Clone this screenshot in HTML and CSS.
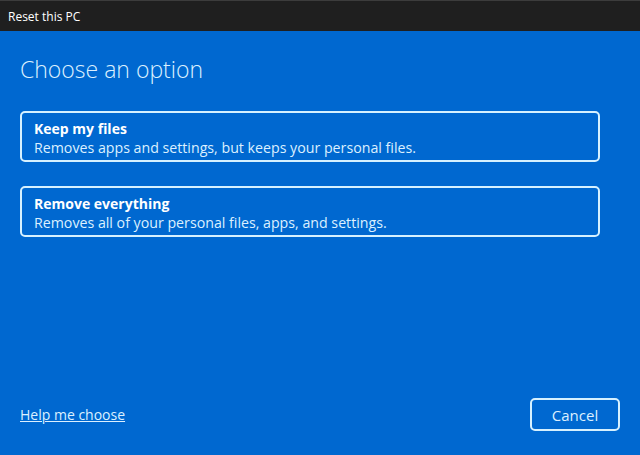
FILE: index.html
```html
<!DOCTYPE html>
<html lang="en">
<head>
    <meta charset="UTF-8">
    <title>Reset this PC</title>
    <link rel="stylesheet" href="styles.css">
</head>
<body>

<div class="window">
    <div class="title-bar">Reset this PC</div>

    <div class="content">
        <h1 class="heading">Choose an option</h1>

        <div class="option">
            <div class="option-title">Keep my files</div>
            <div class="option-desc">Removes apps and settings, but keeps your personal files.</div>
        </div>

        <div class="option">
            <div class="option-title">Remove everything</div>
            <div class="option-desc">Removes all of your personal files, apps, and settings.</div>
        </div>
    </div>

    <div class="footer">
        <a class="help-link" href="#">Help me choose</a>
        <button class="cancel-btn">Cancel</button>
    </div>
</div>

</body>
</html>
```

FILE: styles.css
```css
:root {
    --blue: #0068d0;
    --text: #dcf0ff;
    --edge: #d6f1ff;
}

html, body {
    margin: 0;
    height: 100%;
}

body {
    font-family: "Open Sans", "Noto Sans", sans-serif;
    background-color: var(--blue);
    color: var(--text);
    overflow: hidden;
}

.window {
    display: flex;
    flex-direction: column;
    height: 100%;
}

/* Title bar */
.title-bar {
    height: 30px;
    line-height: 32px;
    background-color: #1f1f1f;
    border-top: 1px solid #3c3c3c;
    color: #ffffff;
    font-size: 12px;
    padding-left: 8px;
}

/* Main area */
.content {
    flex: 1;
    padding: 0 40px 0 20px;
}

.heading {
    font-size: 23px;
    font-weight: 300;
    margin: 22px 0 26px;
    line-height: 32px;
}

.option {
    border: 2px solid var(--edge);
    border-radius: 5px;
    padding: 6px 12px 4px;
    margin-bottom: 24px;
    height: 37px;
}

.option-title {
    font-weight: 700;
    font-size: 14px;
    line-height: 19px;
    color: #ffffff;
}

.option-desc {
    font-size: 14.2px;
    line-height: 19px;
}

/* Footer */
.footer {
    display: flex;
    justify-content: space-between;
    align-items: center;
    padding: 0 20px 24px;
}

.help-link {
    color: var(--text);
    font-size: 14px;
}

.cancel-btn {
    width: 90px;
    height: 33px;
    background: none;
    border: 2px solid var(--edge);
    border-radius: 5px;
    color: var(--text);
    font-family: inherit;
    font-size: 15px;
}
```
